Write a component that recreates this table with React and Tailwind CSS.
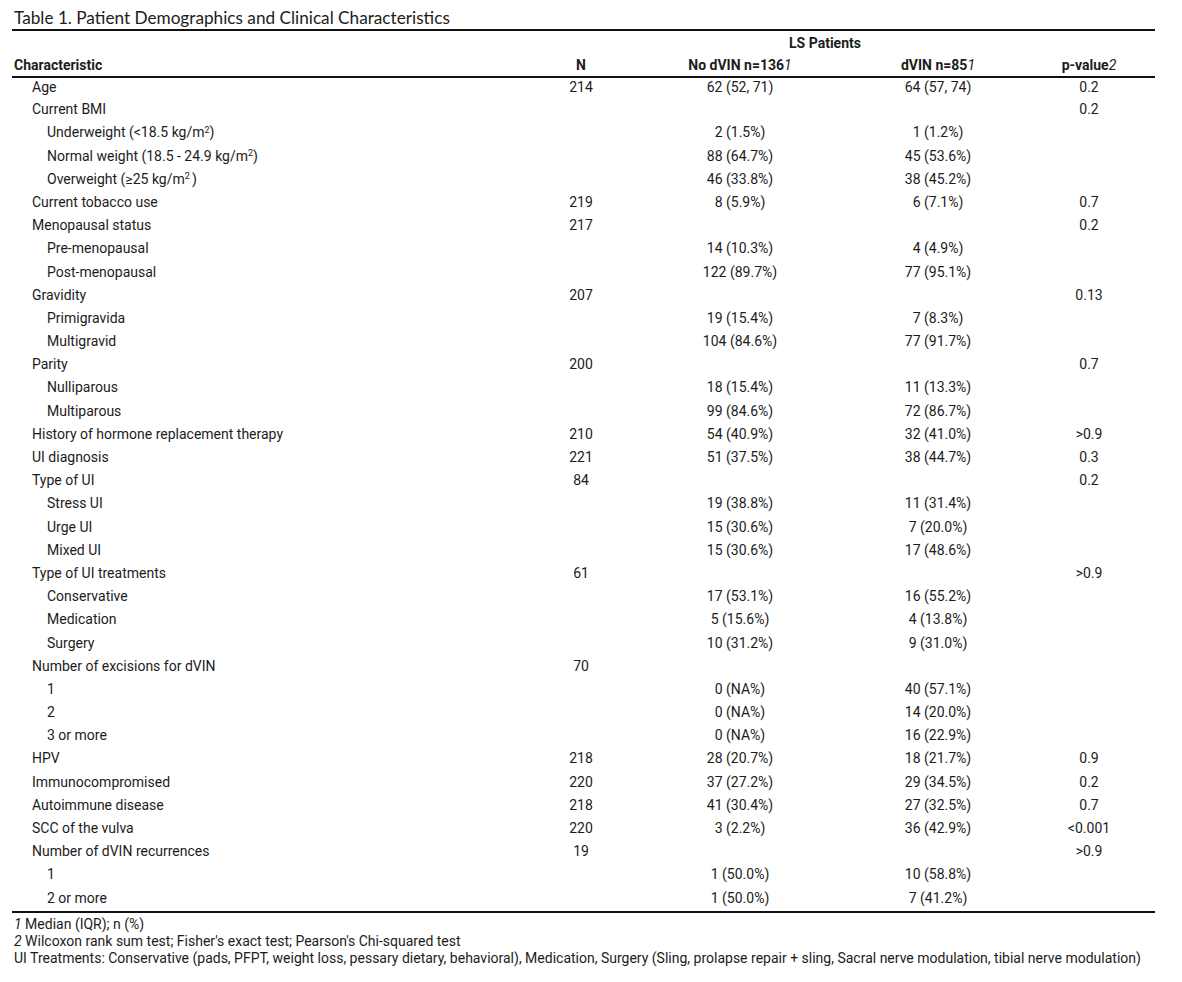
const rows = [
  { label: 'Age', lvl: 1, n: '214', a: '62 (52, 71)', b: '64 (57, 74)', p: '0.2' },
  { label: 'Current BMI', lvl: 1, n: '', a: '', b: '', p: '0.2' },
  { label: <>Underweight (&lt;18.5 kg/m<sup className="text-[9px]">2</sup>)</>, lvl: 2, n: '', a: '2 (1.5%)', b: '1 (1.2%)', p: '' },
  { label: <>Normal weight (18.5 - 24.9 kg/m<sup className="text-[9px]">2</sup>)</>, lvl: 2, n: '', a: '88 (64.7%)', b: '45 (53.6%)', p: '' },
  { label: <>Overweight (≥25 kg/m<sup className="text-[9px]">2 </sup>)</>, lvl: 2, n: '', a: '46 (33.8%)', b: '38 (45.2%)', p: '' },
  { label: 'Current tobacco use', lvl: 1, n: '219', a: '8 (5.9%)', b: '6 (7.1%)', p: '0.7' },
  { label: 'Menopausal status', lvl: 1, n: '217', a: '', b: '', p: '0.2' },
  { label: 'Pre-menopausal', lvl: 2, n: '', a: '14 (10.3%)', b: '4 (4.9%)', p: '' },
  { label: 'Post-menopausal', lvl: 2, n: '', a: '122 (89.7%)', b: '77 (95.1%)', p: '' },
  { label: 'Gravidity', lvl: 1, n: '207', a: '', b: '', p: '0.13' },
  { label: 'Primigravida', lvl: 2, n: '', a: '19 (15.4%)', b: '7 (8.3%)', p: '' },
  { label: 'Multigravid', lvl: 2, n: '', a: '104 (84.6%)', b: '77 (91.7%)', p: '' },
  { label: 'Parity', lvl: 1, n: '200', a: '', b: '', p: '0.7' },
  { label: 'Nulliparous', lvl: 2, n: '', a: '18 (15.4%)', b: '11 (13.3%)', p: '' },
  { label: 'Multiparous', lvl: 2, n: '', a: '99 (84.6%)', b: '72 (86.7%)', p: '' },
  { label: 'History of hormone replacement therapy', lvl: 1, n: '210', a: '54 (40.9%)', b: '32 (41.0%)', p: '>0.9' },
  { label: 'UI diagnosis', lvl: 1, n: '221', a: '51 (37.5%)', b: '38 (44.7%)', p: '0.3' },
  { label: 'Type of UI', lvl: 1, n: '84', a: '', b: '', p: '0.2' },
  { label: 'Stress UI', lvl: 2, n: '', a: '19 (38.8%)', b: '11 (31.4%)', p: '' },
  { label: 'Urge UI', lvl: 2, n: '', a: '15 (30.6%)', b: '7 (20.0%)', p: '' },
  { label: 'Mixed UI', lvl: 2, n: '', a: '15 (30.6%)', b: '17 (48.6%)', p: '' },
  { label: 'Type of UI treatments', lvl: 1, n: '61', a: '', b: '', p: '>0.9' },
  { label: 'Conservative', lvl: 2, n: '', a: '17 (53.1%)', b: '16 (55.2%)', p: '' },
  { label: 'Medication', lvl: 2, n: '', a: '5 (15.6%)', b: '4 (13.8%)', p: '' },
  { label: 'Surgery', lvl: 2, n: '', a: '10 (31.2%)', b: '9 (31.0%)', p: '' },
  { label: 'Number of excisions for dVIN', lvl: 1, n: '70', a: '', b: '', p: '' },
  { label: '1', lvl: 2, n: '', a: '0 (NA%)', b: '40 (57.1%)', p: '' },
  { label: '2', lvl: 2, n: '', a: '0 (NA%)', b: '14 (20.0%)', p: '' },
  { label: '3 or more', lvl: 2, n: '', a: '0 (NA%)', b: '16 (22.9%)', p: '' },
  { label: 'HPV', lvl: 1, n: '218', a: '28 (20.7%)', b: '18 (21.7%)', p: '0.9' },
  { label: 'Immunocompromised', lvl: 1, n: '220', a: '37 (27.2%)', b: '29 (34.5%)', p: '0.2' },
  { label: 'Autoimmune disease', lvl: 1, n: '218', a: '41 (30.4%)', b: '27 (32.5%)', p: '0.7' },
  { label: 'SCC of the vulva', lvl: 1, n: '220', a: '3 (2.2%)', b: '36 (42.9%)', p: '<0.001' },
  { label: 'Number of dVIN recurrences', lvl: 1, n: '19', a: '', b: '', p: '>0.9' },
  { label: '1', lvl: 2, n: '', a: '1 (50.0%)', b: '10 (58.8%)', p: '' },
  { label: '2 or more', lvl: 2, n: '', a: '1 (50.0%)', b: '7 (41.2%)', p: '' },
]

export default function App() {
  return (
    <div className="min-h-[982px] w-[1182px] bg-white text-[#1c1c1c] pt-[7px] pl-[12px]">
      <h1 className="pl-[2px] text-[17.2px] leading-[22px] font-[Lato,sans-serif]">
        Table 1. Patient Demographics and Clinical Characteristics
      </h1>

      <table className="w-[1143px] table-fixed border-collapse text-[14px] leading-[17px] font-[Roboto,sans-serif]">
        <colgroup>
          <col className="w-[523px]" />
          <col className="w-[92px]" />
          <col className="w-[226px]" />
          <col className="w-[170px]" />
          <col className="w-[132px]" />
        </colgroup>
        <thead className="font-bold">
          <tr className="h-[24px] border-t-2 border-[#111]">
            <th colSpan={2}></th>
            <th colSpan={2} className="text-center align-bottom pb-[2px]">LS Patients</th>
            <th></th>
          </tr>
          <tr className="h-[23px] border-b-2 border-[#111]">
            <th className="text-left pl-[2px] align-bottom pb-[2px]">Characteristic</th>
            <th className="text-center align-bottom pb-[2px]">N</th>
            <th className="text-center align-bottom pb-[2px]">No dVIN n=136<i className="font-normal">1</i></th>
            <th className="text-center align-bottom pb-[2px]">dVIN n=85<i className="font-normal">1</i></th>
            <th className="text-center align-bottom pb-[2px]">p-value<i className="font-normal">2</i></th>
          </tr>
        </thead>
        <tbody className="border-b-2 border-[#111]">
          {rows.map((r, i) => (
            <tr key={i} className="h-[23.2px]">
              <td className={r.lvl === 1 ? 'pl-[20px] align-top pt-[1px]' : 'pl-[35px] align-top pt-[1px]'}>{r.label}</td>
              <td className="text-center align-top pt-[1px]">{r.n}</td>
              <td className="text-center align-top pt-[1px]">{r.a}</td>
              <td className="text-center align-top pt-[1px]">{r.b}</td>
              <td className="text-center align-top pt-[1px]">{r.p}</td>
            </tr>
          ))}
        </tbody>
      </table>

      <div className="pl-[2px] pt-[3px] text-[14px] leading-[17px] font-[Roboto,sans-serif]">
        <p><i>1</i> Median (IQR); n (%)</p>
        <p><i>2</i> Wilcoxon rank sum test; Fisher's exact test; Pearson's Chi-squared test</p>
        <p>UI Treatments: Conservative (pads, PFPT, weight loss, pessary dietary, behavioral), Medication, Surgery (Sling, prolapse repair + sling, Sacral nerve modulation, tibial nerve modulation)</p>
      </div>
    </div>
  )
}
